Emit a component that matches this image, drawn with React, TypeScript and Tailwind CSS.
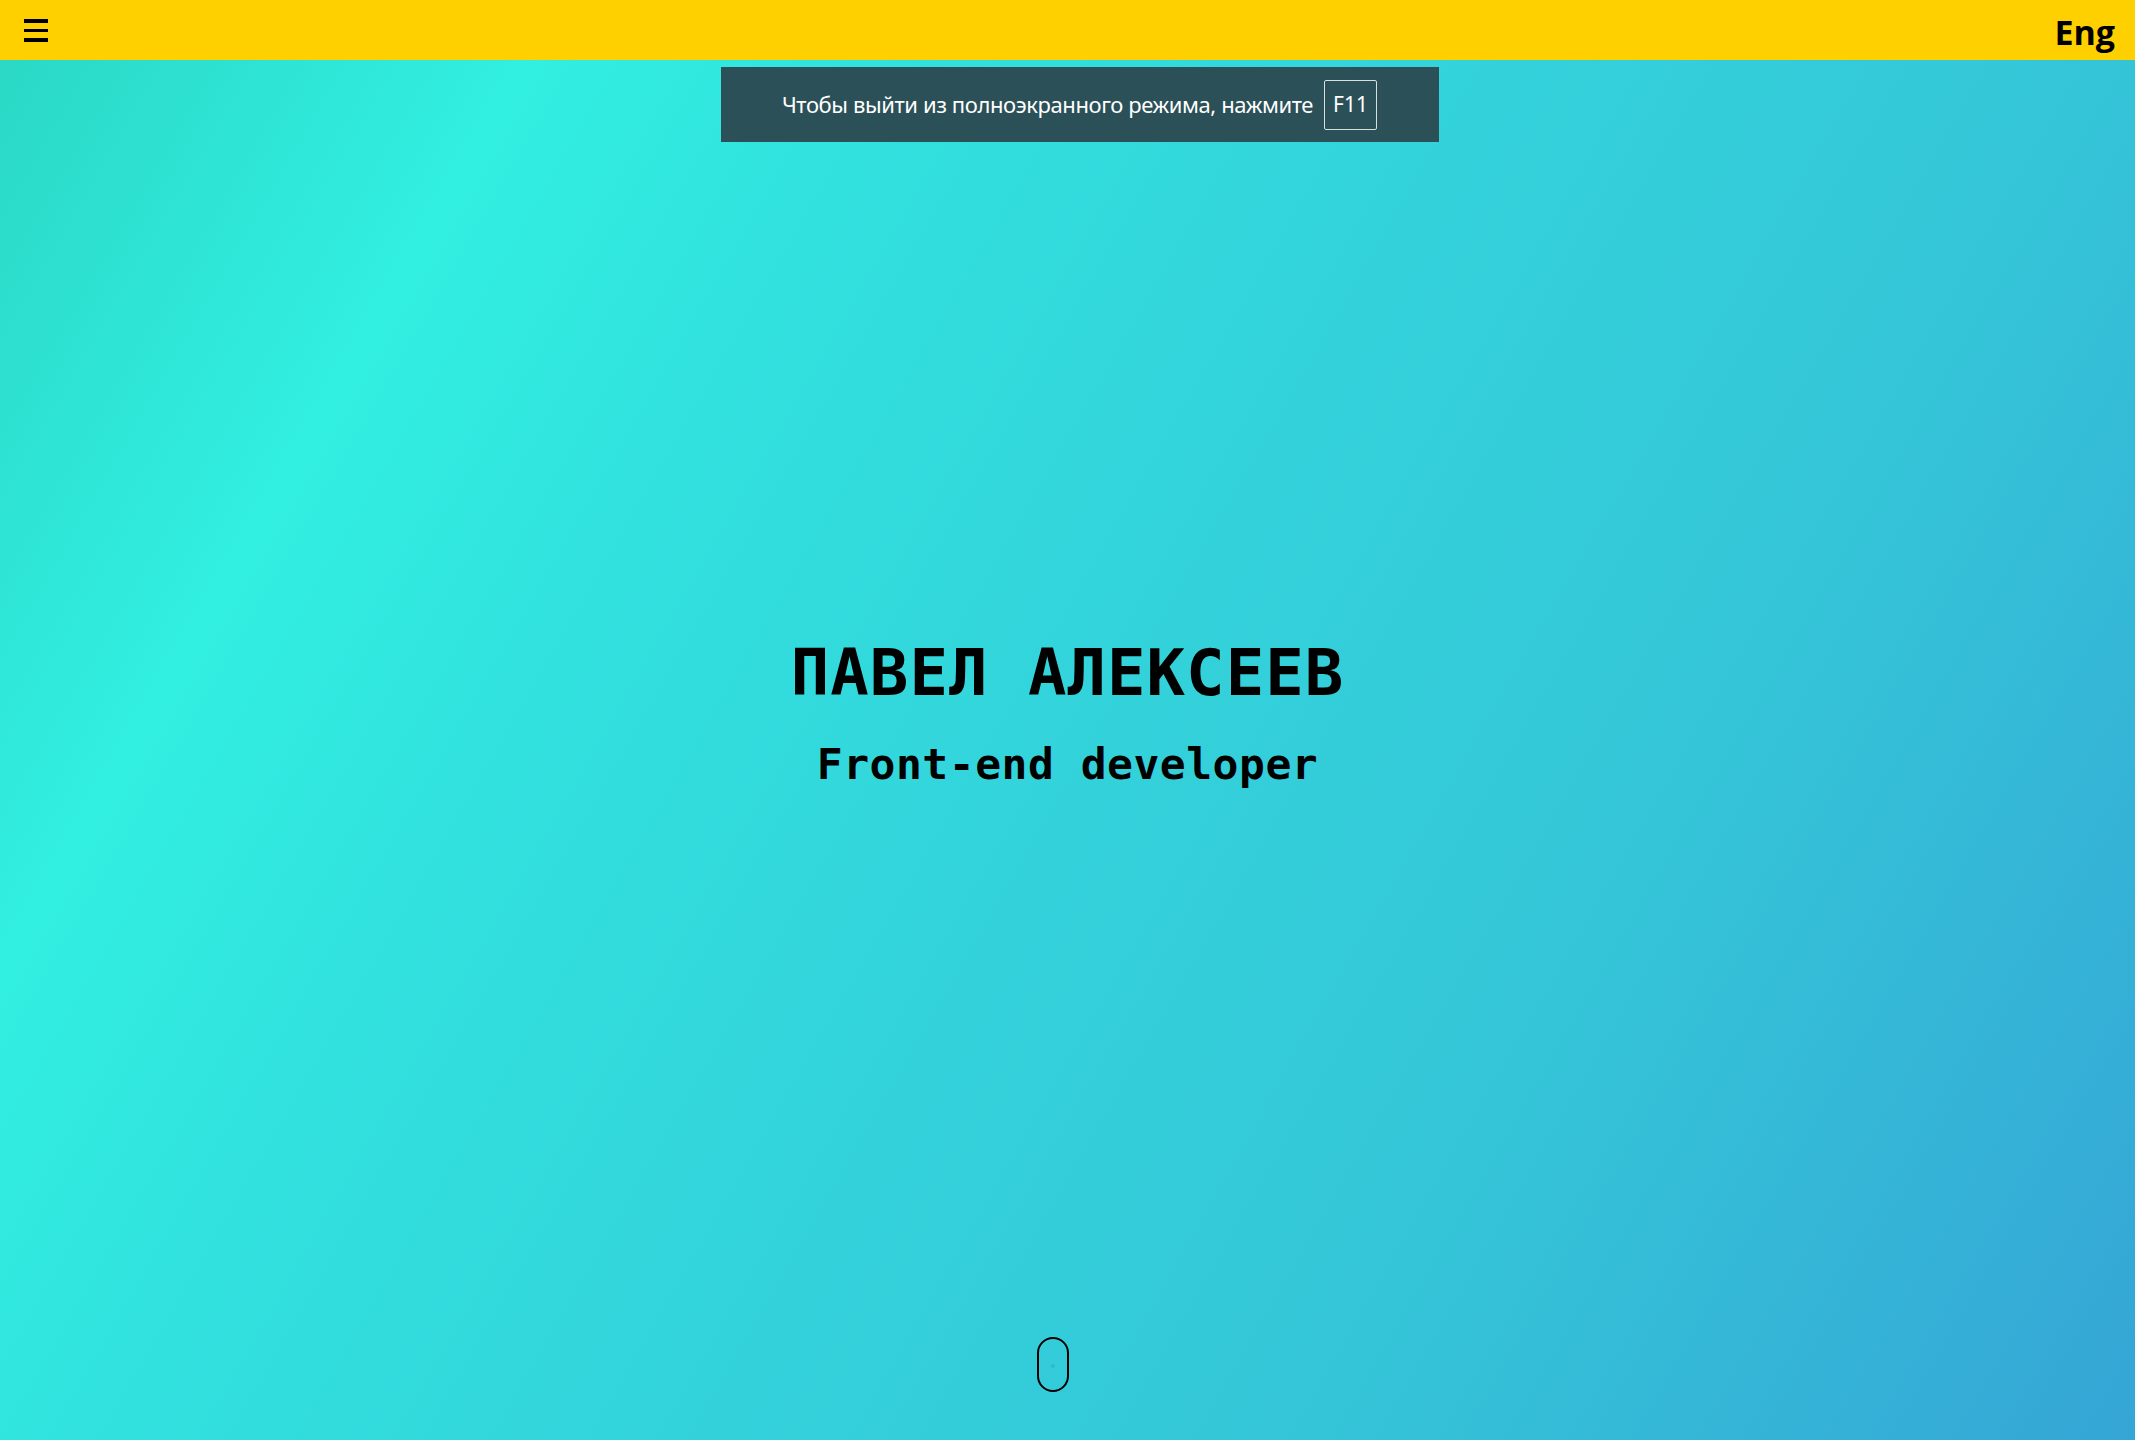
import React from "react";

const Header = () => (
  <header className="h-[60px] bg-[#ffd000] flex items-center justify-between pl-6 pr-5 shrink-0">
    <button className="flex flex-col gap-[6px] w-6" aria-label="menu">
      <span className="block h-1 w-6 bg-black" />
      <span className="block h-[3px] w-6 bg-black" />
      <span className="block h-1 w-6 bg-black" />
    </button>
    <span className="font-['Open_Sans',sans-serif] font-bold text-[34px] leading-none text-black pt-1">Eng</span>
  </header>
);

const FullscreenNotice = () => (
  <div className="absolute top-[7px] left-1/2 -translate-x-[347px] w-[718px] h-[75px] bg-[#2b5057] flex items-center justify-center gap-[11px] font-['Noto_Sans',sans-serif] text-white">
    <span className="text-[22px] tracking-[-0.4px]">Чтобы выйти из полноэкранного режима, нажмите</span>
    <span className="w-[53px] h-[50px] border border-[#d7dfe0] rounded-[2px] flex items-center justify-center text-[21px]">F11</span>
  </div>
);

export default function App() {
  return (
    <div className="h-screen w-full flex flex-col overflow-hidden">
      <Header />
      <main className="relative flex-1 flex flex-col items-center bg-[linear-gradient(120deg,#2bd8c6_0%,#31efe1_18%,#31e2de_30%,#33d3db_50%,#34c5d8_72%,#35a5d6_100%)]">
        <FullscreenNotice />
        <div className="flex-1 flex flex-col items-center justify-center pt-[30px] font-['DejaVu_Sans_Mono',monospace] font-bold text-black">
          <h1 className="text-[64px] leading-none tracking-[1px]">ПАВЕЛ АЛЕКСЕЕВ</h1>
          <p className="text-[43px] leading-none mt-[38px] tracking-[0.5px]">Front-end developer</p>
        </div>
        <div className="mb-[48px] mr-[30px] w-[32px] h-[55px] border-2 border-black rounded-full flex justify-center pt-[25px]">
          <span className="block w-[4px] h-[4px] rounded-full bg-[#2aa9c4] opacity-50" />
        </div>
      </main>
    </div>
  );
}
